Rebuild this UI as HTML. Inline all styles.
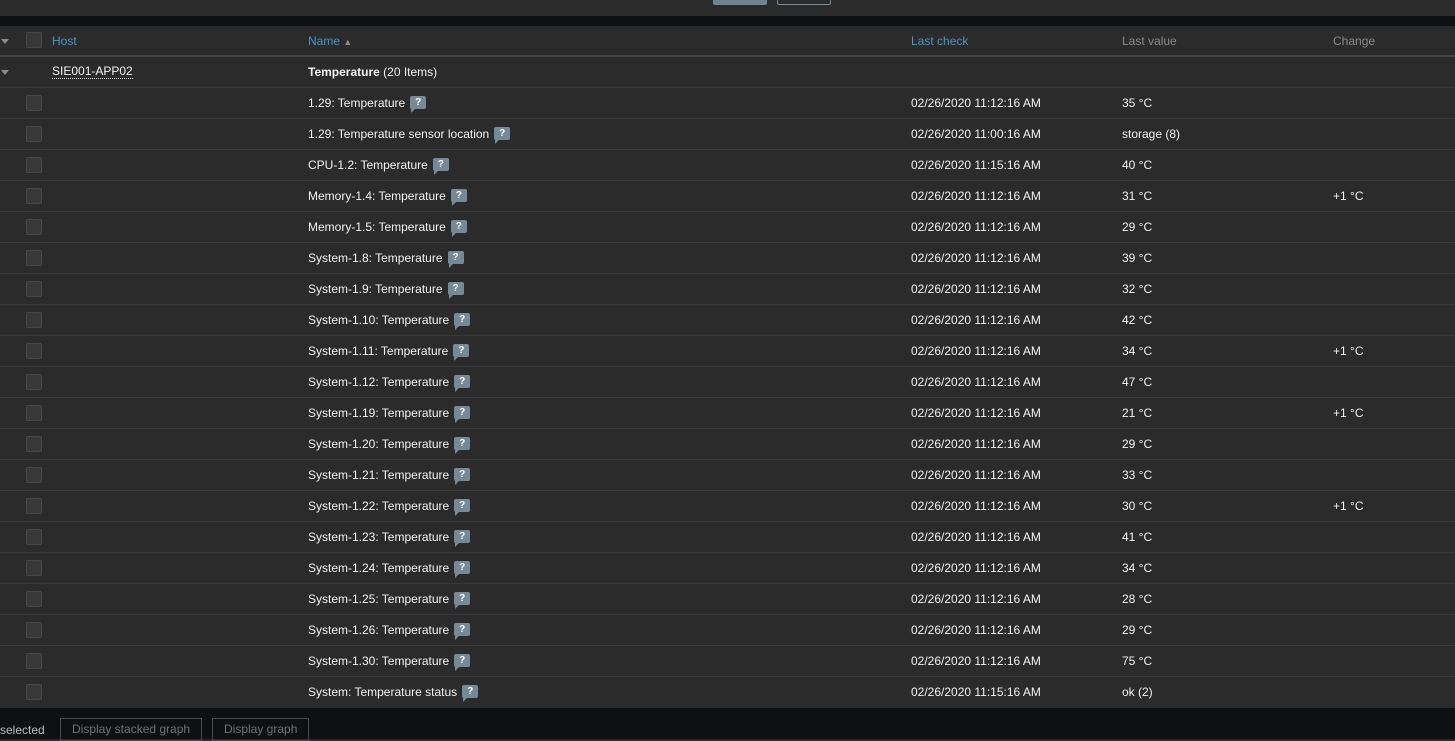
<!DOCTYPE html>
<html><head><meta charset="utf-8"><style>
*{margin:0;padding:0;box-sizing:border-box}
body{width:1455px;height:739px;background:#2b2b2b;font-family:"Liberation Sans",Arial,sans-serif;font-size:12px;color:#f2f2f2;position:relative;overflow:hidden}
.abs{position:absolute}
.top{left:0;top:0;width:1455px;height:16px;background:#2b2b2b}
.blk{left:0;top:16px;width:1455px;height:10px;background:#0f1012}
.hdr{left:0;top:26px;width:1455px;height:31px;background:#2b2b2b;border-bottom:2px solid #444}
.row{position:absolute;left:0;width:1455px;height:31px;border-bottom:1px solid #383838}
.row span{position:absolute;top:8px;white-space:nowrap}
.cb{position:absolute;left:26px;top:7px;width:16px;height:16px;border:1px solid #484848;background:#383838;border-radius:2px}
.hl{color:#4796c4}
.gr{color:#8a8a8a}
.q{display:inline-block;position:relative;width:16px;height:13px;background:#768997;border-radius:2px;color:#fff;font-size:10px;font-weight:bold;text-align:center;line-height:13px;margin-left:5px;vertical-align:2px;font-style:normal}
.q:after{content:"";position:absolute;left:1px;bottom:-4px;border-left:4px solid #768997;border-bottom:4px solid transparent}
.arr{position:absolute;left:1px;top:13px;border-left:4px solid transparent;border-right:4px solid transparent;border-top:5px solid #8a8a8a}
.bot{left:0;top:708px;width:1455px;height:31px;background:#0f1012}
.btn{position:absolute;top:10px;height:23px;border:1px solid #4a4a4a;color:#6f6f6f;line-height:21px;padding:0 11px}
</style></head><body>
<div class="abs top"></div>
<div class="abs" style="left:713px;top:0;width:54px;height:5px;background:#6e8290;border-radius:0 0 2px 2px"></div>
<div class="abs" style="left:777px;top:-2px;width:54px;height:7px;border:1px solid #768997;border-radius:2px"></div>
<div class="abs blk"></div>
<div class="abs hdr">
 <div class="arr" style="top:13px"></div><div class="cb" style="top:6px"></div>
 <span class="abs hl" style="left:52px;top:8px">Host</span>
 <span class="abs hl" style="left:308px;top:8px">Name <span style="font-size:9px;color:#8a8a8a">▲</span></span>
 <span class="abs hl" style="left:911px;top:8px">Last check</span>
 <span class="abs gr" style="left:1122px;top:8px">Last value</span>
 <span class="abs gr" style="left:1333px;top:8px">Change</span>
</div>
<div class="row" style="top:57px"><div class="arr"></div><span style="left:52px;border-bottom:1px dotted #ddd;line-height:13px">SIE001-APP02</span><span style="left:308px"><b>Temperature</b> (20 Items)</span></div>
<div class="row" style="top:88px"><div class="cb"></div><span style="left:308px">1.29: Temperature<i class="q">?</i></span><span style="left:911px">02/26/2020 11:12:16 AM</span><span style="left:1122px">35 °C</span></div>
<div class="row" style="top:119px"><div class="cb"></div><span style="left:308px">1.29: Temperature sensor location<i class="q">?</i></span><span style="left:911px">02/26/2020 11:00:16 AM</span><span style="left:1122px">storage (8)</span></div>
<div class="row" style="top:150px"><div class="cb"></div><span style="left:308px">CPU-1.2: Temperature<i class="q">?</i></span><span style="left:911px">02/26/2020 11:15:16 AM</span><span style="left:1122px">40 °C</span></div>
<div class="row" style="top:181px"><div class="cb"></div><span style="left:308px">Memory-1.4: Temperature<i class="q">?</i></span><span style="left:911px">02/26/2020 11:12:16 AM</span><span style="left:1122px">31 °C</span><span style="left:1333px">+1 °C</span></div>
<div class="row" style="top:212px"><div class="cb"></div><span style="left:308px">Memory-1.5: Temperature<i class="q">?</i></span><span style="left:911px">02/26/2020 11:12:16 AM</span><span style="left:1122px">29 °C</span></div>
<div class="row" style="top:243px"><div class="cb"></div><span style="left:308px">System-1.8: Temperature<i class="q">?</i></span><span style="left:911px">02/26/2020 11:12:16 AM</span><span style="left:1122px">39 °C</span></div>
<div class="row" style="top:274px"><div class="cb"></div><span style="left:308px">System-1.9: Temperature<i class="q">?</i></span><span style="left:911px">02/26/2020 11:12:16 AM</span><span style="left:1122px">32 °C</span></div>
<div class="row" style="top:305px"><div class="cb"></div><span style="left:308px">System-1.10: Temperature<i class="q">?</i></span><span style="left:911px">02/26/2020 11:12:16 AM</span><span style="left:1122px">42 °C</span></div>
<div class="row" style="top:336px"><div class="cb"></div><span style="left:308px">System-1.11: Temperature<i class="q">?</i></span><span style="left:911px">02/26/2020 11:12:16 AM</span><span style="left:1122px">34 °C</span><span style="left:1333px">+1 °C</span></div>
<div class="row" style="top:367px"><div class="cb"></div><span style="left:308px">System-1.12: Temperature<i class="q">?</i></span><span style="left:911px">02/26/2020 11:12:16 AM</span><span style="left:1122px">47 °C</span></div>
<div class="row" style="top:398px"><div class="cb"></div><span style="left:308px">System-1.19: Temperature<i class="q">?</i></span><span style="left:911px">02/26/2020 11:12:16 AM</span><span style="left:1122px">21 °C</span><span style="left:1333px">+1 °C</span></div>
<div class="row" style="top:429px"><div class="cb"></div><span style="left:308px">System-1.20: Temperature<i class="q">?</i></span><span style="left:911px">02/26/2020 11:12:16 AM</span><span style="left:1122px">29 °C</span></div>
<div class="row" style="top:460px"><div class="cb"></div><span style="left:308px">System-1.21: Temperature<i class="q">?</i></span><span style="left:911px">02/26/2020 11:12:16 AM</span><span style="left:1122px">33 °C</span></div>
<div class="row" style="top:491px"><div class="cb"></div><span style="left:308px">System-1.22: Temperature<i class="q">?</i></span><span style="left:911px">02/26/2020 11:12:16 AM</span><span style="left:1122px">30 °C</span><span style="left:1333px">+1 °C</span></div>
<div class="row" style="top:522px"><div class="cb"></div><span style="left:308px">System-1.23: Temperature<i class="q">?</i></span><span style="left:911px">02/26/2020 11:12:16 AM</span><span style="left:1122px">41 °C</span></div>
<div class="row" style="top:553px"><div class="cb"></div><span style="left:308px">System-1.24: Temperature<i class="q">?</i></span><span style="left:911px">02/26/2020 11:12:16 AM</span><span style="left:1122px">34 °C</span></div>
<div class="row" style="top:584px"><div class="cb"></div><span style="left:308px">System-1.25: Temperature<i class="q">?</i></span><span style="left:911px">02/26/2020 11:12:16 AM</span><span style="left:1122px">28 °C</span></div>
<div class="row" style="top:615px"><div class="cb"></div><span style="left:308px">System-1.26: Temperature<i class="q">?</i></span><span style="left:911px">02/26/2020 11:12:16 AM</span><span style="left:1122px">29 °C</span></div>
<div class="row" style="top:646px"><div class="cb"></div><span style="left:308px">System-1.30: Temperature<i class="q">?</i></span><span style="left:911px">02/26/2020 11:12:16 AM</span><span style="left:1122px">75 °C</span></div>
<div class="row" style="top:677px;border-bottom:none"><div class="cb"></div><span style="left:308px">System: Temperature status<i class="q">?</i></span><span style="left:911px">02/26/2020 11:15:16 AM</span><span style="left:1122px">ok (2)</span></div>
<div class="abs bot">
 <span class="abs" style="left:0;top:15px;color:#bbb">selected</span>
 <div class="btn" style="left:60px">Display stacked graph</div>
 <div class="btn" style="left:212px">Display graph</div>
</div>
</body></html>
